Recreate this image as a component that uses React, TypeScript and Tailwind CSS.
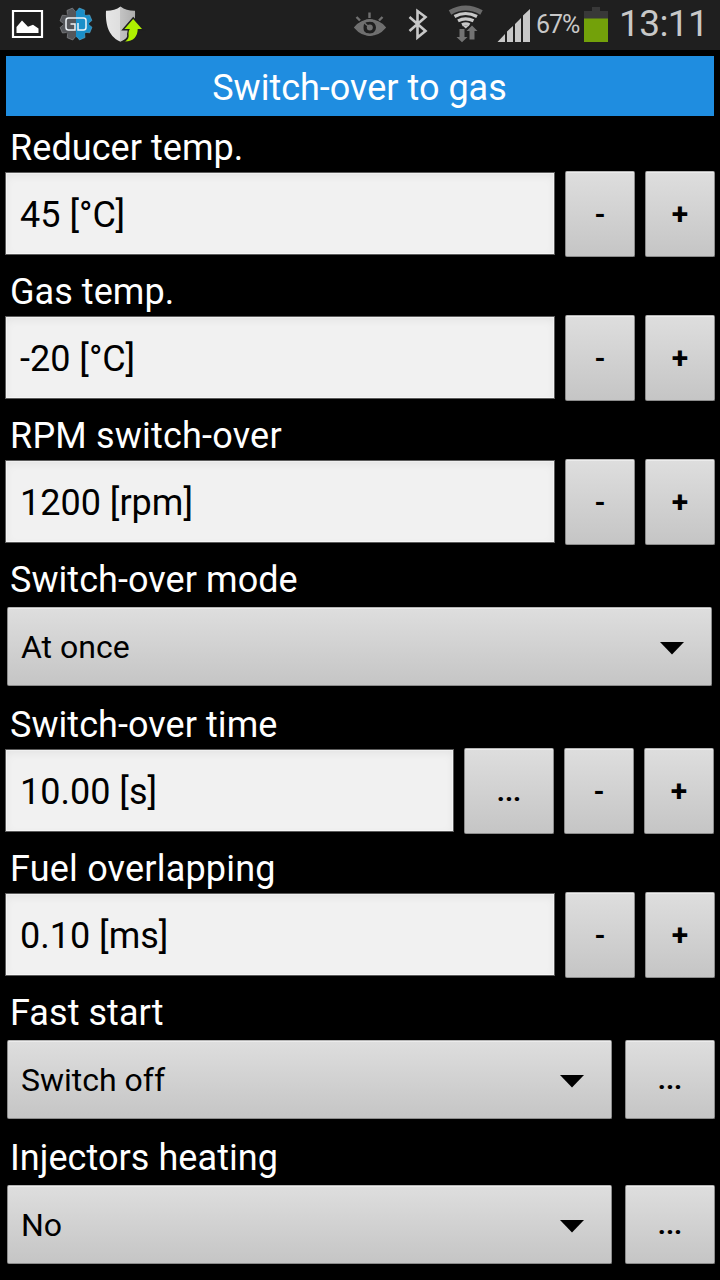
import { ReactNode } from 'react'

const raised =
  'bg-linear-to-b from-[#dedede] to-[#c5c5c5] border border-[#8c8c8c] border-t-[#b4b4b4] rounded-[2px] text-black shadow-[inset_0_1px_0_#ececec]'

const StatusBar = () => (
  <header className="flex h-[50px] w-full shrink-0 bg-[#1f1f1f] text-[#c8c8c8]">
    <LeftIcons />
    <div className="w-[190px] shrink-0" />
    <RightIcons />
    <span className="w-[50px] shrink-0 pl-[2px] text-[25px] leading-[50px] tracking-[-1px]">67%</span>
    <svg width="24" height="50" viewBox="584 0 24 50" className="shrink-0">
      <path d="M592 7h8v4h8v8h-24v-8h8z" fill="#383838" />
      <path d="M584 18.500h24V42h-24z" fill="#73a10a" />
    </svg>
    <span className="pl-[11px] text-[37px] leading-[48px] tracking-[-0.6px] whitespace-nowrap">13:11</span>
  </header>
)

const GEAR_TEETH = [22, 67, 112, 157, 202, 247, 292, 337]

const LeftIcons = () => (
  <svg width="150" height="50" viewBox="0 0 150 50" className="shrink-0">
    <defs>
      <linearGradient id="shield" x1="0" x2="1">
        <stop offset="0" stopColor="#e6e6e6" />
        <stop offset="0.5" stopColor="#dedede" />
        <stop offset="0.5" stopColor="#c3c3c3" />
        <stop offset="1" stopColor="#adadad" />
      </linearGradient>
      <clipPath id="gearLeft">
        <path d="M58 5h18v38H58z" />
      </clipPath>
      <clipPath id="gearRight">
        <path d="M76 5h18v38H76z" />
      </clipPath>
    </defs>

    {/* picture */}
    <path d="M13 11h29v26H13z" fill="none" stroke="#fff" strokeWidth="2.200" />
    <path d="M16.500 33v-6l5.500-6.500 6 6.300 5-2 5.500 3.700V33z" fill="#fff" />

    {/* gear */}
    {['gearLeft', 'gearRight'].map((side) => (
      <g
        key={side}
        clipPath={`url(#${side})`}
        fill={side === 'gearLeft' ? '#55575b' : '#1a8fc9'}
        stroke={side === 'gearLeft' ? '#8b8d90' : '#5aa5c8'}
        strokeWidth="0.600"
      >
        {GEAR_TEETH.map((angle) => (
          <path key={angle} d="M71 15l2-7h6l2 7z" transform={`rotate(${angle} 76 24)`} />
        ))}
        <circle cx="76" cy="24" r="13.200" stroke="none" />
      </g>
    ))}
    <path
      d="M76 18h-7.500a2.500 2.500 0 0 0-2.500 2.500v7a2.500 2.500 0 0 0 2.500 2.500h6.500v-6h-4.500M78 23v7h5.500a2.500 2.500 0 0 0 2.500-2.500v-7a2.500 2.500 0 0 0-2.500-2.500H76"
      fill="none"
      stroke="#eef4f8"
      strokeWidth="1.500"
    />

    {/* shield */}
    <path d="M120.500 6.500c4 3.200 9 4.300 14.500 4.200.5 11-1 25-14.500 31C107 35.700 105.500 21.700 106 10.700c5.500.1 10.500-1 14.500-4.200z" fill="url(#shield)" />
    <path
      d="M133.200 19l8.800 10h-4.300c0 7-4 12.500-12.700 12.500 3.500-2 4-5 3.500-7.500 0-3 1-4.500 1.500-5h-5.500z"
      fill="#aef000"
      stroke="#1f1f1f"
      strokeWidth="3"
      paintOrder="stroke"
    />
  </svg>
)

const RightIcons = () => (
  <svg width="194" height="50" viewBox="340 0 194 50" className="shrink-0">
    {/* eye */}
    <g fill="none" stroke="#707070">
      <path d="M356.500 17l3.500 3.500M369.500 12.500v5.500M382.500 17l-3.500 3.500" strokeWidth="2.400" />
      <path d="M355.500 27.500c8-9.500 21-9.500 29 0-8 9.500-21 9.500-29 0z" strokeWidth="2.500" />
      <circle cx="369.500" cy="27.500" r="7.500" strokeWidth="2" />
    </g>
    <path d="M354.500 27.500l9-5.500v11zM385.500 27.500l-9-5.500v11z" fill="#707070" />
    <circle cx="369.800" cy="27.500" r="3" fill="#707070" />
    <path d="M364.500 23l4 3.500" stroke="#707070" strokeWidth="1.500" />

    {/* bluetooth */}
    <path d="M409.500 17l16 14-8 6.500V11l8 6-16 14" fill="none" stroke="#c8c8c8" strokeWidth="2.600" />

    {/* wifi with traffic arrows */}
    <g fill="none">
      <path d="M450 12.500q15.500-9 31.500 0" stroke="#6a6a6a" strokeWidth="5" />
      <path d="M454.500 16.500q11-6 22.500 0M458 20.800q7.500-4 15.500 0M462 24.800q4-2 7.500 0" stroke="#c8c8c8" strokeWidth="3.200" />
    </g>
    <path d="M462.500 25.500h6.500l-3.200 3z" fill="#c8c8c8" />
    <path d="M459.500 29h5v8h3l-5.500 5.300-5.500-5.300h3zM469.500 39.500V31h-3l5.500-5.500 5.500 5.500h-3v8.500z" fill="#737373" />

    {/* signal */}
    <path
      d="M497.500 42l7.500-8v8zM507 42V31.500l6-5.500v16zM515 42V24l6-6v24zM523 42V15.500l7-6.500v33z"
      fill="#c8c8c8"
    />
  </svg>
)

type RowProps = { label: string; tall?: boolean; wide?: boolean; children: ReactNode }

const Row = ({ label, tall, wide, children }: RowProps) => (
  <section className={tall ? 'h-[145px] shrink-0' : 'h-[144px] shrink-0'}>
    <h2
      className={`h-[55px] pt-[11px] pl-[10px] text-[36px] leading-[42px] text-white ${wide ? 'tracking-[0.2px]' : 'tracking-[0.06px]'}`}
    >
      {label}
    </h2>
    <div className="flex">{children}</div>
  </section>
)

const ValueField = ({ value }: { value: string }) => (
  <div className="mt-px ml-[5px] mr-[10px] h-[83px] flex-1 border border-[#5c5c5c] bg-[#f1f1f1] pl-[14px] text-[36px] leading-[84px] text-black shadow-[inset_0_3px_8px_rgba(0,0,0,0.06),inset_0_0_0_1px_#fafafa]">
    {value}
  </div>
)

const StepButtons = () => (
  <div className="flex gap-[10px]">
    <button className={`${raised} h-[86px] w-[70px] text-[28px] leading-[86px] font-bold`}>-</button>
    <button className={`${raised} h-[86px] w-[70px] text-[30px] leading-[84px] font-bold`}>+</button>
  </div>
)

const Spinner = ({ value }: { value: string }) => (
  <div className={`${raised} mt-[4px] ml-[7px] flex h-[79px] flex-1 items-center justify-between pr-[27px] pl-[13px] text-[32px]`}>
    <span>{value}</span>
    <svg width="24" height="13" viewBox="0 0 24 13" className="mt-[4px]">
      <path d="M0 0h24L12 12.500z" />
    </svg>
  </div>
)

const MoreButton = () => (
  <button className={`${raised} mt-[4px] mr-[5px] ml-[13px] h-[79px] w-[90px] text-[28px] font-bold`}>...</button>
)

const App = () => {
  return (
    <main className="flex h-[1280px] w-[720px] flex-col overflow-hidden bg-black font-[Roboto,sans-serif]">
      <StatusBar />
      <h1 className="mx-[6px] mt-[6px] h-[60px] shrink-0 bg-[#1f8de0] pr-px text-center text-[36px] leading-[64px] text-white">
        Switch-over to gas
      </h1>

      <Row label="Reducer temp.">
        <ValueField value="45 [°C]" />
        <StepButtons />
        <div className="w-[5px]" />
      </Row>
      <Row label="Gas temp.">
        <ValueField value="-20 [°C]" />
        <StepButtons />
        <div className="w-[5px]" />
      </Row>
      <Row label="RPM switch-over" wide>
        <ValueField value="1200 [rpm]" />
        <StepButtons />
        <div className="w-[5px]" />
      </Row>
      <Row label="Switch-over mode" tall>
        <Spinner value="At once" />
        <div className="w-[8px]" />
      </Row>
      <Row label="Switch-over time">
        <ValueField value="10.00 [s]" />
        <button className={`${raised} mr-[10px] h-[86px] w-[90px] pt-px text-[28px] font-bold`}>...</button>
        <StepButtons />
        <div className="w-[6px]" />
      </Row>
      <Row label="Fuel overlapping" wide>
        <ValueField value="0.10 [ms]" />
        <StepButtons />
        <div className="w-[5px]" />
      </Row>
      <Row label="Fast start" tall>
        <Spinner value="Switch off" />
        <MoreButton />
      </Row>
      <Row label="Injectors heating" tall>
        <Spinner value="No" />
        <MoreButton />
      </Row>
    </main>
  )
}

export default App
